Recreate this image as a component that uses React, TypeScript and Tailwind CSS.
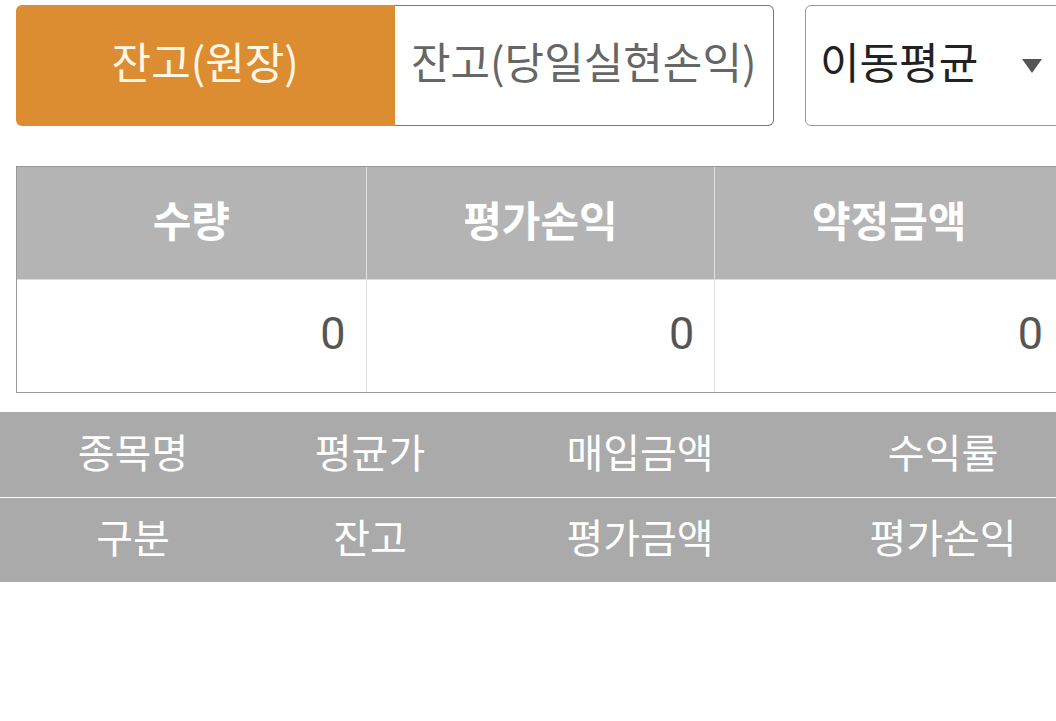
const kr = "font-['Noto_Sans_CJK_KR','Noto_Sans',sans-serif]";

const summary = [
  { label: "수량", value: "0" },
  { label: "평가손익", value: "0" },
  { label: "약정금액", value: "0" },
];

const listHead = [
  ["종목명", "평균가", "매입금액", "수익률"],
  ["구분", "잔고", "평가금액", "평가손익"],
];

const colW = ["w-[266px]", "w-[208px]", "w-[332px]", "w-[274px]"];

export default function App() {
  return (
    <div className={`w-[1056px] h-[721px] overflow-hidden bg-white ${kr}`}>
      <div className="w-[1080px]">
        {/* Tabs + select */}
        <div className="flex gap-[31px] px-4 pt-[5px]">
          <div className="flex w-[758px] h-[121px]">
            <button className="flex-1 bg-[#dd8d31] rounded-l-[6px] text-[#fff7e6] text-[43px] leading-none flex items-center justify-center pb-[10px]">
              잔고(원장)
            </button>
            <button className="flex-1 bg-white border border-l-0 border-[#777] rounded-r-[6px] text-[#666] text-[43px] leading-none flex items-center justify-center pb-[10px]">
              잔고(당일실현손익)
            </button>
          </div>
          <div className="w-[259px] h-[121px] border border-[#999] rounded-[6px] flex items-center justify-between pl-[14px] pr-[21px]">
            <span className="text-[43px] text-[#222] leading-none pb-[10px]">이동평균</span>
            <svg width="20" height="14" viewBox="0 0 20 14">
              <path d="M0 0H20L10 14Z" fill="#555" />
            </svg>
          </div>
        </div>

        {/* Summary table */}
        <div className="mx-4 mt-[40px] border border-[#999] grid grid-cols-3">
          {summary.map((c, i) => (
            <div key={c.label} className={i > 0 ? "border-l border-[#e0e0e0]" : ""}>
              <div className="h-[112px] bg-[#b4b4b4] flex items-center justify-center text-white text-[42px] font-bold leading-none pb-[8px]">
                {c.label}
              </div>
              <div className="h-[113px] border-t border-[#ddd] flex items-center justify-end pr-[20px] text-[#555] text-[45px] font-['Roboto',sans-serif] pb-[4px]">
                {c.value}
              </div>
            </div>
          ))}
        </div>

        {/* List header */}
        <div className="mt-[19px] bg-[#aaaaaa]">
          {listHead.map((row, r) => (
            <div key={r} className={`flex h-[85px] ${r > 0 ? "border-t border-white" : ""}`}>
              {row.map((t, i) => (
                <div key={t} className={`${colW[i]} flex items-center justify-center text-white text-[40px] leading-none pb-[8px]`}>
                  {t}
                </div>
              ))}
            </div>
          ))}
        </div>
      </div>
    </div>
  );
}
